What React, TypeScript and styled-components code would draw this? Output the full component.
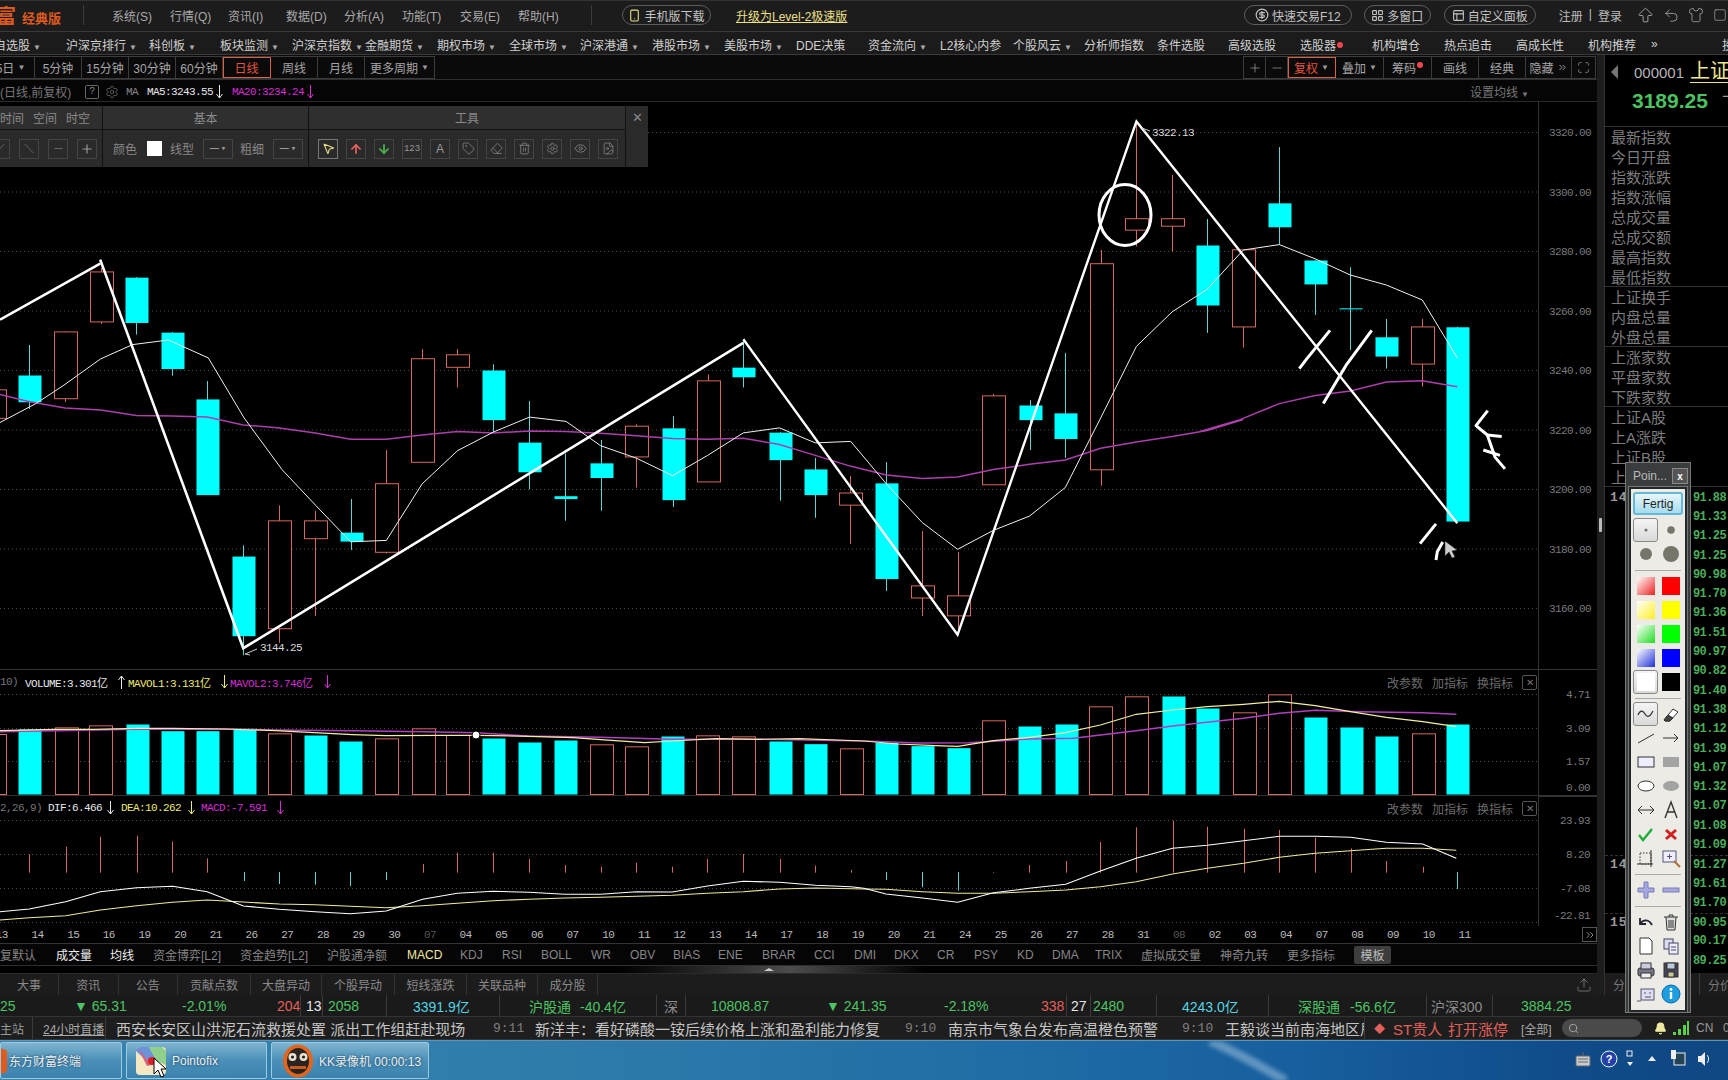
import React from 'react';
import styled, { createGlobalStyle } from 'styled-components';
import {
  Smartphone, CircleDollarSign, LayoutGrid, PanelsTopLeft, ArrowBigUp, Undo2, Shirt, Square,
  Settings, MousePointer2, ArrowUp, ArrowDown, Eraser, Trash2, Eye, Minus, Plus, Tag, FileImage,
  Maximize, ChevronsRight, Search, Bell, Upload,
} from 'lucide-react';

const SANS = `"Liberation Sans","Noto Sans CJK SC",sans-serif`;
const MONO = `"Liberation Mono","Noto Sans CJK SC",monospace`;

const Global = createGlobalStyle`
  html, body { margin: 0; padding: 0; background: #000; }
  #root { width: 1728px; height: 1080px; overflow: hidden; }
  * { box-sizing: border-box; }
`;

/* ---------- chart data, sampled from the picture ---------- */
const Y = (z: number) => 100 + z / 2.8;
const XA = (z: number) => z / 2.376;
const XB = (z: number) => 660 + z / 2.376;
const XC = (z: number) => 1200 + z / 3;
type C = [number, number, number, number, number, 'u' | 'd'];
const c9: C[] = [
  [-15, 810, 890, 810, 890, 'u'], [70, 686, 865, 770, 845, 'd'], [155, 648, 845, 648, 835, 'u'], [239, 470, 627, 480, 620, 'u'],
  [324, 496, 657, 496, 623, 'd'], [409, 650, 772, 650, 752, 'd'], [492, 787, 1105, 837, 1105, 'd'], [578, 1247, 1555, 1277, 1500, 'd'],
  [664, 1135, 1520, 1177, 1479, 'u'], [749, 1150, 1445, 1177, 1227, 'u'], [833, 1117, 1260, 1210, 1235, 'd'], [918, 980, 1270, 1073, 1265, 'u'],
  [1003, 697, 1013, 723, 1013, 'u'], [1087, 697, 805, 712, 747, 'u'], [1172, 740, 930, 756, 895, 'd'], [1258, 843, 1090, 958, 1041, 'd'],
  [1343, 990, 1178, 1108, 1116, 'd'], [1427, 952, 1150, 1016, 1057, 'd'], [1512, 908, 1085, 912, 998, 'u'],
];
const c10: C[] = [
  [30, 885, 1140, 918, 1119, 'd'], [113, 768, 1068, 785, 1068, 'u'], [198, 672, 805, 748, 775, 'd'], [284, 930, 1122, 930, 1007, 'd'],
  [369, 1002, 1170, 1033, 1105, 'd'], [452, 1053, 1243, 1099, 1133, 'u'], [538, 1014, 1375, 1072, 1340, 'd'], [623, 1207, 1445, 1359, 1393, 'u'],
  [707, 1265, 1490, 1387, 1443, 'u'], [792, 823, 1076, 827, 1076, 'u'], [878, 840, 980, 854, 895, 'd'], [963, 708, 1002, 876, 948, 'd'],
  [1047, 420, 1080, 457, 1034, 'u'], [1132, 60, 410, 331, 363, 'u'], [1217, 210, 425, 331, 352, 'u'], [1300, 333, 652, 406, 574, 'd'], [1386, 418, 693, 418, 634, 'u'],
];
const c11: C[] = [
  [238, 132, 405, 288, 355, 'd'], [346, 448, 602, 448, 515, 'd'], [451, 468, 700, 582, 584, 'd'], [559, 613, 752, 663, 717, 'd'], [667, 613, 802, 634, 738, 'u'], [772, 635, 1179, 635, 1179, 'd'],
];
const candles = [
  ...c9.map(c => ({ c, x: XA(c[0]) })), ...c10.map(c => ({ c, x: XB(c[0]) })), ...c11.map(c => ({ c, x: XC(c[0]) })),
];
type P = [number, number];
const conv = (pts: P[], fx: (n: number) => number, fy: (n: number) => number) => pts.map(([a, b]) => `${fx(a).toFixed(1)},${fy(b).toFixed(1)}`).join(' ');

const ma5 = [
  conv([[0, 903], [85, 850], [150, 800], [239, 725], [315, 685], [400, 672], [495, 722], [580, 890], [670, 1035], [750, 1135], [833, 1237], [918, 1233], [1003, 1075], [1087, 982], [1172, 930], [1258, 888], [1345, 900], [1427, 968], [1512, 1003]], XA, Y),
  conv([[30, 1052], [113, 995], [198, 932], [284, 918], [369, 960], [453, 956], [538, 1075], [623, 1183], [707, 1258], [792, 1205], [878, 1165], [963, 1085], [1047, 890], [1132, 690], [1217, 593], [1300, 530], [1386, 420]], XB, Y),
  conv([[238, 405], [346, 445], [451, 490], [559, 518], [667, 560], [772, 722]], XC, Y),
].join(' ');
const ma20 = [
  conv([[0, 825], [70, 845], [155, 862], [239, 868], [324, 883], [409, 885], [492, 888], [578, 910], [664, 918], [749, 932], [833, 950], [918, 950], [1003, 938], [1087, 928], [1172, 932], [1258, 927], [1343, 928], [1427, 933], [1512, 940]], XA, Y),
  conv([[30, 948], [113, 950], [198, 947], [284, 965], [369, 995], [452, 1025], [538, 1050], [623, 1060], [707, 1056], [792, 1035], [878, 1020], [963, 1008], [1047, 975], [1132, 958], [1217, 942], [1300, 925], [1386, 895]], XB, Y),
  conv([[0, 928], [120, 895], [238, 850], [346, 827], [451, 815], [559, 790], [667, 786], [772, 803]], XC, Y),
].join(' ');

const trendA = `0,${Y(615)} ${XA(238)},${Y(458)}`;
const trendB = `${XA(238)},${Y(447)} ${XA(578)},${Y(1535)} ${XB(198)},${Y(680)}`;
const trendC = `${XB(198)},${Y(670)} ${XB(707)},${Y(1497)} ${XB(1132)},${Y(60)} ${XC(0)},${Y(283)} ${XC(772)},${Y(1185)}`;
const scribbles = [
  [[298, 752], [320, 725], [390, 645]], [[370, 850], [440, 740], [515, 645]], [[660, 1242], [708, 1187]], [[708, 1288], [712, 1265], [728, 1238]],
  [[863, 870], [828, 912], [862, 938], [885, 1000], [915, 1033]], [[862, 938], [905, 942]], [[850, 980], [900, 995]],
] as P[][];

const FX = (z: number) => z / 1.815;
const GX = (z: number) => 864 + z / 1.815;
const VY = (z: number) => 660 + z / 3;
type V = [number, number, 'u' | 'd'];
const volA: V[] = [[-11, 222, 'u'], [53, 207, 'd'], [119, 202, 'u'], [182, 196, 'u'], [248, 192, 'd'], [313, 212, 'd'], [376, 212, 'd'], [442, 205, 'd'], [507, 220, 'u'], [572, 225, 'd'], [636, 243, 'd'], [701, 235, 'u'], [767, 205, 'u'], [830, 225, 'u'], [895, 234, 'd'], [960, 246, 'd'], [1026, 240, 'd'], [1090, 253, 'u'], [1155, 259, 'u'], [1220, 228, 'd'], [1284, 226, 'u'], [1349, 229, 'u'], [1415, 243, 'd'], [1480, 251, 'd'], [1544, 265, 'u']];
const volB: V[] = [[40, 247, 'd'], [106, 257, 'd'], [170, 263, 'd'], [235, 181, 'u'], [300, 198, 'd'], [366, 192, 'd'], [429, 139, 'u'], [494, 109, 'u'], [560, 108, 'd'], [623, 144, 'd'], [689, 157, 'u'], [754, 103, 'u'], [819, 171, 'd'], [883, 201, 'd'], [948, 228, 'd'], [1014, 220, 'u'], [1077, 192, 'd']];
const volBars = [...volA.map(v => ({ x: FX(v[0]), t: VY(v[1]), k: v[2] })), ...volB.map(v => ({ x: GX(v[0]), t: VY(v[1]), k: v[2] }))];
const volYellow = conv([[0, 212], [100, 208], [170, 208], [248, 205], [313, 205], [410, 207], [500, 212], [570, 218], [640, 224], [700, 227], [800, 226], [864, 226], [960, 229], [1040, 233], [1110, 241], [1170, 248], [1220, 243], [1300, 236], [1380, 238], [1450, 236], [1568, 243]], FX, VY) + ' ' + conv([[60, 252], [130, 257], [170, 259], [235, 242], [300, 232], [366, 218], [429, 195], [494, 163], [560, 150], [623, 140], [689, 133], [754, 124], [819, 137], [883, 155], [948, 172], [1014, 185], [1075, 200]], GX, VY);
const volPurple = conv([[0, 215], [100, 212], [248, 208], [410, 207], [500, 210], [640, 212], [770, 215], [864, 218], [960, 228], [1090, 232], [1220, 238], [1380, 238], [1568, 243]], FX, VY) + ' ' + conv([[100, 249], [190, 248], [300, 237], [380, 235], [494, 212], [560, 198], [689, 175], [754, 160], [819, 151], [900, 155], [1014, 158], [1075, 163]], GX, VY);

const macdA: [number, number, number][] = [[53, 583, 638], [119, 560, 638], [182, 530, 638], [248, 527, 638], [313, 545, 638], [376, 595, 638], [442, 636, 663], [507, 636, 672], [572, 636, 674], [636, 636, 678], [701, 636, 660], [767, 612, 638], [830, 578, 638], [895, 578, 638], [960, 597, 638], [1025, 615, 638], [1090, 620, 638], [1155, 608, 638], [1220, 620, 638], [1284, 597, 638], [1349, 582, 638], [1415, 597, 638], [1480, 617, 638], [1544, 630, 638]];
const macdB: [number, number, number][] = [[40, 636, 660], [106, 636, 682], [170, 636, 692], [235, 636, 638], [300, 615, 638], [366, 603, 638], [429, 546, 638], [494, 502, 638], [560, 482, 638], [623, 500, 638], [689, 506, 638], [754, 510, 638], [819, 533, 638], [883, 565, 638], [948, 603, 638], [1014, 620, 638], [1077, 636, 687]];
const macdBars = [...macdA.map(m => ({ x: FX(m[0]), a: m[1], b: m[2] })), ...macdB.map(m => ({ x: GX(m[0]), a: m[1], b: m[2] }))];
const dif = conv([[0, 755], [53, 747], [119, 725], [182, 695], [248, 683], [313, 679], [376, 695], [442, 738], [507, 748], [572, 755], [636, 761], [701, 753], [767, 718], [830, 700], [895, 694], [960, 697], [1025, 703], [1090, 703], [1155, 695], [1220, 696], [1284, 678], [1349, 664], [1415, 667], [1480, 676], [1544, 680]], FX, VY) + ' ' + conv([[0, 685], [40, 702], [106, 714], [170, 727], [235, 698], [300, 685], [366, 673], [429, 633], [494, 595], [560, 565], [623, 556], [689, 542], [754, 529], [819, 529], [883, 532], [948, 547], [1014, 552], [1075, 595]], GX, VY);
const dea = conv([[0, 780], [53, 773], [119, 767], [182, 750], [248, 737], [313, 727], [376, 720], [442, 726], [507, 732], [572, 734], [636, 739], [701, 743], [767, 737], [830, 730], [895, 722], [960, 718], [1025, 714], [1090, 712], [1155, 709], [1220, 706], [1284, 700], [1349, 695], [1415, 687], [1480, 684]], FX, VY) + ' ' + conv([[0, 687], [40, 688], [106, 695], [170, 700], [235, 700], [300, 695], [366, 690], [429, 680], [494, 665], [560, 642], [623, 625], [689, 610], [754, 592], [819, 580], [883, 572], [948, 565], [1014, 565], [1075, 571]], GX, VY);

const RED = '#d4695f';
const CYAN = '#00ffff';
const WICK_D = '#5fd4d4';
const GRID = '#4a4a4a';

/* ---------- shell ---------- */
const Page = styled.div`
  position: relative; width: 1728px; height: 1080px; overflow: hidden; background: #111;
  font-family: ${SANS}; font-size: 12px; color: #aaa; display: flex; flex-direction: column;
`;
const TitleBar = styled.header`
  height: 32px; flex: none; display: flex; align-items: center; background: #1c1c1c; border-bottom: 1px solid #3a3a3a; border-top: 1px solid #333; padding-bottom: 2px;
`;
const Logo = styled.div`
  width: 84px; height: 20px; display: flex; align-items: center; border-right: 1px solid #3c3c3c; margin-right: 28px; color: #dd5a1e; overflow: hidden; flex: none;
  b { font-size: 20px; margin-left: -4px; margin-right: 6px; font-weight: 700; }
  span { font-size: 13px; margin-top: 5px; font-weight: 700; }
`;
const MenuItem = styled.span`
  width: 58px; flex: none; color: #a9a9a9; font-size: 12px; white-space: nowrap;
`;
const MenuDivider = styled.span`width: 1px; height: 20px; background: #3c3c3c; margin: 0 30px 0 15px; flex: none;`;
const Pill = styled.span<{ $w: number; $mr: number }>`
  width: ${p => p.$w}px; margin-right: ${p => p.$mr}px; height: 20px; flex: none; border: 1px solid #5c5c5c; border-radius: 10px;
  display: flex; align-items: center; justify-content: center; gap: 3px; color: #c4c4c4; font-size: 12px; white-space: nowrap;
`;
const UpgradeLink = styled.a`color: #ede08a; text-decoration: underline; font-size: 12px; white-space: nowrap; margin-left: 25px;`;
const TitleRight = styled.div`margin-left: auto; margin-right: -5px; display: flex; align-items: center; flex: none;`;
const LoginText = styled.span`color: #bdbdbd; margin-right: 14px; display: flex; gap: 6px;`;
const IconSlot = styled.span<{ $w: number }>`width: ${p => p.$w}px; display: flex; color: #a8a8a8; flex: none;`;

const NavBar = styled.nav`
  height: 23px; flex: none; display: flex; align-items: center; background: #1b1b1b; border-bottom: 1px solid #3a3a3a; white-space: nowrap; overflow: hidden; padding-top: 2px;
`;
const NavItem = styled.span<{ $w: number; $first?: boolean }>`
  width: ${p => p.$w}px; flex: none; color: #cfcfcf; font-size: 12px; white-space: nowrap; ${p => (p.$first ? 'margin-left: -6px;' : '')}
  i { color: #aaa; font-style: normal; font-size: 8px; margin-left: 3px; }
  em { display: inline-block; width: 6px; height: 6px; border-radius: 50%; background: #f0454f; margin-left: 1px; vertical-align: 2px; }
`;

const Body = styled.div`flex: none; display: flex; height: 940px;`;
const LeftColumn = styled.div`width: 1597px; flex: none; display: flex; flex-direction: column; background: #000; overflow: hidden;`;
const Gutter = styled.div`
  width: 7px; flex: none; background: #1d1d1d; display: flex; align-items: center; justify-content: center;
  &::after { content: ''; width: 3px; height: 14px; background: #bbb; border-radius: 1px; }
`;

const PeriodRow = styled.div`
  height: 25px; flex: none; display: flex; align-items: flex-start; padding-top: 1px; border-bottom: 1px solid #2f2f2f; background: #0a0a0a; justify-content: space-between;
`;
const TabGroup = styled.div<{ $ml?: number; $mr?: number }>`
  display: flex; margin-left: ${p => p.$ml ?? 0}px; margin-right: ${p => p.$mr ?? 0}px; border: 1px solid #3c3c3c; border-left-width: ${p => (p.$ml ? 0 : 1)}px; height: 23px;
`;
const PeriodTab = styled.span<{ $w: number; $on?: boolean }>`
  width: ${p => p.$w}px; flex: none; display: flex; align-items: center; justify-content: center; gap: 3px; white-space: nowrap; font-size: 12px; position: relative;
  color: ${p => (p.$on ? '#e4533e' : '#a5a5a5')}; outline: ${p => (p.$on ? '1px solid #d9603f' : 'none')}; outline-offset: -1px;
  border-right: 1px solid #3c3c3c; &:last-child { border-right: 0; }
  i { font-style: normal; font-size: 8px; color: #999; }
  em { width: 6px; height: 6px; border-radius: 50%; background: #f0454f; margin-bottom: 6px; margin-left: -2px; }
`;
const InfoRow = styled.div`
  height: 22px; flex: none; display: flex; align-items: center; padding-top: 2px; background: #050505; border-bottom: 1px solid #2a2a2a; white-space: nowrap; position: relative; font-family: ${MONO}; font-size: 11px; letter-spacing: -0.6px;
`;
const InfoText = styled.span<{ $c: string; $w?: number; $sans?: boolean }>`
  color: ${p => p.$c}; ${p => (p.$w ? `width:${p.$w}px;` : '')} flex: none; display: inline-flex; align-items: center; gap: 3px;
  ${p => (p.$sans ? `font-family: ${SANS}; font-size: 12px; letter-spacing: 0;` : '')}
`;
const HelpBox = styled.span`width: 14px; height: 14px; border: 1px solid #666; border-radius: 2px; color: #888; display: flex; align-items: center; justify-content: center; font-size: 10px;`;
const SetMa = styled.span`position: absolute; left: 1470px; color: #777; font-family: ${SANS}; font-size: 12px; letter-spacing: 0;
  i { font-style: normal; font-size: 8px; margin-left: 3px; }`;

const ChartPane = styled.section<{ $h: number }>`position: relative; height: ${p => p.$h}px; flex: none; background: #000; overflow: hidden;`;
const ChartSvg = styled.svg`display: block; position: absolute; left: 0; top: 0;`;
const PaneTitle = styled.div<{ $top: number }>`
  position: absolute; left: 0; top: ${p => p.$top}px; height: 14px; display: flex; align-items: center; white-space: nowrap; font-family: ${MONO}; font-size: 11px; letter-spacing: -0.6px;
`;
const PaneTools = styled.div<{ $top: number }>`
  position: absolute; right: 60px; top: ${p => p.$top}px; display: flex; align-items: center; gap: 9px; color: #6b6b6b; font-size: 12px; white-space: nowrap;
`;
const PaneClose = styled.span`width: 15px; height: 15px; border: 1px solid #555; border-radius: 2px; display: flex; align-items: center; justify-content: center; font-size: 10px; color: #777;`;

const Toolbox = styled.div`
  position: absolute; left: 0; top: 4px; width: 648px; height: 61px; display: grid; grid-template-columns: 103px 206px 317px 22px; background: #2a2a2a;
`;
const ToolSection = styled.div`display: flex; flex-direction: column; border-right: 1px solid #111; overflow: hidden;`;
const ToolHead = styled.div<{ $start?: boolean }>`
  height: 24px; flex: none; background: #2f2f2f; border-bottom: 1px solid #111; display: flex; align-items: center; justify-content: ${p => (p.$start ? 'flex-start' : 'center')}; gap: 9px; color: #8a8a8a; font-size: 12px; white-space: nowrap;
`;
const ToolBody = styled.div<{ $ml?: number }>`flex: 1; display: flex; align-items: center; margin-left: ${p => p.$ml ?? 0}px;`;
const ToolBtn = styled.span<{ $w?: number; $mr: number; $sel?: boolean; $c?: string; $big?: boolean }>`
  width: ${p => p.$w ?? 20}px; height: 20px; flex: none; margin-right: ${p => p.$mr}px; border: 1px solid ${p => (p.$sel ? '#777' : '#444')};
  display: flex; align-items: center; justify-content: center; color: ${p => p.$c ?? '#999'}; gap: 2px;
  font-size: ${p => (p.$big ? 12 : 9)}px; font-family: ${p => (p.$big ? SANS : MONO)};
`;
const ToolLabel = styled.span<{ $mr: number }>`margin-right: ${p => p.$mr}px; color: #888; font-size: 12px; flex: none;`;
const Swatch = styled.span`width: 15px; height: 15px; background: #fff; flex: none; margin-right: 8px;`;
const ToolClose = styled.div`display: flex; align-items: flex-start; justify-content: center; padding-top: 4px; color: #888; font-size: 13px; background: #2a2a2a;`;

const DateRow = styled.div`height: 18px; flex: none; display: flex; align-items: center; margin-left: -16px; border-bottom: 1px solid #333; background: #000; position: relative; font-family: ${MONO}; font-size: 11px; letter-spacing: -0.6px;`;
const DateCell = styled.span<{ $dim?: boolean }>`width: 35.68px; flex: none; text-align: center; color: ${p => (p.$dim ? '#555' : '#bbb')};`;
const DateMore = styled.span`position: absolute; left: 1598px; top: 1px; width: 15px; height: 15px; border: 1px solid #555; display: flex; align-items: center; justify-content: center; color: #888;`;

const PosRow = styled.div<{ $h: number; $bg: string; $bt?: string }>`
  height: ${p => p.$h}px; flex: none; display: flex; align-items: center; background: ${p => p.$bg}; white-space: nowrap; overflow: hidden; ${p => (p.$bt ? `border-bottom: 1px solid ${p.$bt};` : '')}
`;
const PosCell = styled.span<{ $w: number; $c?: string; $sep?: boolean; $size?: number; $u?: boolean; $mono?: boolean }>`
  width: ${p => p.$w}px; flex: none; color: ${p => p.$c ?? '#8c8c8c'}; font-size: ${p => p.$size ?? 12}px; white-space: nowrap; overflow: hidden; align-self: stretch; display: flex; align-items: center;
  ${p => (p.$sep ? 'border-left: 1px solid #3a3a3a;' : '')} ${p => (p.$u ? 'text-decoration: underline;' : '')}
  ${p => (p.$mono ? `font-family: ${MONO};` : '')}
`;
const TemplateTag = styled.span`background: #3d3d3d; color: #bbb; height: 18px; width: 37px; border-radius: 2px; display: flex; align-items: center; justify-content: center; font-size: 12px;`;
const Splitter = styled.div`
  height: 7px; flex: none; background: linear-gradient(90deg, #000 620px, #4c4c4c 790px, #000 925px); padding-left: 764px;
  &::after { content: ''; display: block; width: 0; height: 0; border: 5px solid transparent; border-bottom: 3px solid #ccc; border-top: 0; margin-top: 2px; }
`;
const BottomTabs = styled.div`height: 22px; flex: none; display: flex; background: #1c1c1c; position: relative; border-top: 1px solid #2a2a2a;`;
const BottomTab = styled.span<{ $w: number }>`width: ${p => p.$w}px; flex: none; display: flex; align-items: center; justify-content: center; color: #8a8a8a; font-size: 12px; border-right: 1px solid #333; white-space: nowrap;`;
const Dock = styled.span`position: absolute; left: 1576px; top: 3px; color: #999; display: flex;`;

/* ---------- right panel ---------- */
const RightPanel = styled.aside`flex: 1; min-width: 0; background: #000; display: flex; flex-direction: column; overflow: hidden; border-left: 1px solid #333;`;
const QuoteHead = styled.div`height: 71px; flex: none; padding: 4px 0 0 6px; box-shadow: 0 1px 0 #333; white-space: nowrap;`;
const CodeLine = styled.div`display: flex; align-items: center; height: 26px; font-size: 15px; color: #b5b5b5;
  i { width: 0; height: 0; border: 7px solid transparent; border-right-color: #777; border-left: 0; margin-right: 16px; }
  b { color: #f0e68a; font-weight: 400; font-size: 20px; margin-left: 6px; border-bottom: 1px solid #f0e68a; line-height: 21px; }
`;
const BigPrice = styled.div`display: flex; align-items: center; height: 32px; margin-left: 21px; color: #4bc163; font: 700 21px ${SANS};
  span { color: #999; font-size: 16px; font-weight: 400; margin-left: 14px; }
`;
const StatGroup = styled.div`box-shadow: 0 1px 0 #333; padding: 0 0 0 6px; flex: none;`;
const StatRow = styled.div`height: 20px; display: flex; align-items: center; color: #7c7c7c; font-size: 15px; white-space: nowrap;`;
const Ticks = styled.div`flex: 1; padding-top: 2px; overflow: hidden;`;
const TickRow = styled.div<{ $dash?: boolean }>`
  height: 19.3px; display: flex; align-items: center; position: relative; font: 700 12px ${MONO}; letter-spacing: -0.6px;
  ${p => (p.$dash ? 'border-top: 1px dashed #333;' : '')}
`;
const TickTime = styled.span`width: 88px; padding-left: 5px; color: #999; font-size: 13px; letter-spacing: 1px;`;
const TickVal = styled.span`color: #4aad5a;`;
const SideTabs = styled.div`height: 22px; flex: none; display: flex; background: #1c1c1c; margin-top: auto;`;
const SideTab = styled.span`width: 95px; flex: none; border-right: 1px solid #3a3a3a; color: #777; display: flex; align-items: center; padding-left: 8px; font-size: 12px;`;

/* ---------- Pointofix ---------- */
const Palette = styled.div`
  position: absolute; left: 1625px; top: 462px; width: 66px; height: 551px; background: #3a3d3e; border: 1px solid #777; display: flex; flex-direction: column; padding: 0 3px;
`;
const PaletteTitle = styled.div`height: 24px; flex: none; display: flex; align-items: center; justify-content: space-between; padding-left: 4px; color: #b9b9b9; font-size: 12px; padding-top: 2px;`;
const PaletteClose = styled.span`width: 16px; height: 16px; background: #555; border: 1px solid #888; color: #fff; font-size: 10px; font-weight: 700; display: flex; align-items: center; justify-content: center; margin-right: -1px;`;
const PaletteInner = styled.div`flex: 1; background: #ecebe6; border: 2px solid #22282a; outline: 1px solid #777; display: flex; flex-direction: column; align-items: center; padding-top: 3px;`;
const Fertig = styled.span`width: 50px; height: 23px; flex: none; background: linear-gradient(#e8f6fb, #a5dcef); border: 2px solid #66b8d8; border-radius: 3px; color: #222; font-size: 12px; display: flex; align-items: center; justify-content: center;`;
const IconGrid = styled.div`display: grid; grid-template-columns: 25px 25px; grid-auto-rows: 24px; flex: none; margin-top: 3px;`;
const IconCell = styled.span<{ $sel?: boolean }>`
  display: flex; align-items: center; justify-content: center; border-radius: 3px; ${p => (p.$sel ? 'background: linear-gradient(#f5f5f5,#d9d9d9); border: 1px solid #8a8a8a;' : '')}
`;
const ColorChip = styled.span<{ $c: string; $soft?: boolean }>`
  width: 18px; height: 18px; display: block; background: ${p => (p.$soft ? `linear-gradient(135deg, #fff, ${p.$c})` : p.$c)};
`;
const PalSep = styled.hr`width: 46px; flex: none; border: 0; height: 1px; background: #aaa; margin: 4px 0 0;`;

/* ---------- task bar ---------- */
const NewsIcons = styled.span`display: flex; align-items: center;`;
const SearchBox = styled.span`width: 80px; height: 18px; border-radius: 9px; background: #4a4a4a; display: flex; align-items: center; padding-left: 6px; color: #aaa;`;
const Taskbar = styled.footer`
  height: 40px; flex: none; position: relative; overflow: hidden; display: flex; gap: 4px; padding-top: 1px; border-top: 1px solid #5d94b8;
  background: linear-gradient(90deg, #3a85ae 0%, #2f7cab 32%, #1f6ba4 60%, #175f9e 75%, #104c8a 90%, #0f4782 100%);
`;
const Streak = styled.svg`position: absolute; left: 1190px; top: 0; filter: blur(2px);`;
const TaskItem = styled.div<{ $w: number; $pl: number }>`
  width: ${p => p.$w}px; height: 37px; flex: none; position: relative; display: flex; align-items: center; gap: 5px; padding-left: ${p => p.$pl}px; color: #e8f2f8; font-size: 12px; white-space: nowrap; border-radius: 2px; overflow: hidden;
  background: linear-gradient(#7fb4cf, #4a90b8 50%, #3a82ae); border: 1px solid #9ccbe0; text-shadow: 0 0 3px #234;
`;
const Tray = styled.div`position: absolute; right: 16px; top: 7px; display: flex; align-items: center; gap: 8px; color: #dbe7f0;`;
const EdgeIcon = styled.svg`position: absolute; left: -8px; top: 4px;`;
const CursorIcon = styled.svg`position: absolute; left: 26px; top: 14px;`;

/* ---------- small drawings ---------- */
const Arrow: React.FC<{ d?: 'up' | 'down'; c: string }> = ({ d = 'down', c }) => (
  <svg width="7" height="14" viewBox="0 0 7 14" fill="none" stroke={c} strokeWidth="1">
    {d === 'down' ? <path d="M3.5 0v13M.5 9l3 4 3-4" /> : <path d="M3.5 14V1M.5 5l3-4 3 4" />}
  </svg>
);
const Ic: React.FC<{ children: React.ReactNode; s?: number }> = ({ children, s = 20 }) => (
  <svg width={s} height={s} viewBox="0 0 20 20" fill="none" stroke="#333" strokeWidth="1">{children}</svg>
);
const pfDot = (r: number) => <Ic><circle cx="10" cy="10" r={r} fill="#77756a" stroke="none" /></Ic>;
const pfIcons: React.ReactNode[] = [
  <Ic><path d="M2 11c2-5 5-5 7-1s5 3 8-3" strokeWidth="1.2" /></Ic>,
  <Ic><path d="M3 16l9-11 5 3-8 9H4z" fill="#fff" /><path d="M3 16l4-5 5 3-3 3H4z" fill="#444" /></Ic>,
  <Ic><path d="M2 15L18 6" /></Ic>,
  <Ic><path d="M2 10h15M13 6l4 4-4 4" /></Ic>,
  <Ic><rect x="2" y="5" width="16" height="10" fill="#eef" /></Ic>,
  <Ic><rect x="2" y="5" width="16" height="10" fill="#a3a3a3" stroke="none" /></Ic>,
  <Ic><ellipse cx="10" cy="10" rx="8" ry="5" fill="#fff" /></Ic>,
  <Ic><ellipse cx="10" cy="10" rx="8" ry="5" fill="#a3a3a3" stroke="none" /></Ic>,
  <Ic><path d="M2 10h16M6 6l-4 4 4 4M14 6l4 4-4 4" /></Ic>,
  <Ic><path d="M4 18L10 2l6 16M6.5 12h7" strokeWidth="1.4" /></Ic>,
  <Ic><path d="M3 11l4 5 9-11" stroke="#1fae3a" strokeWidth="2.4" /></Ic>,
  <Ic><path d="M5 6l10 9M15 6L5 15" stroke="#d02020" strokeWidth="3" /></Ic>,
  <Ic><path d="M1 16h16M15 2v17" /><rect x="4" y="5" width="11" height="11" strokeDasharray="1.5 1.5" /></Ic>,
  <Ic><rect x="2" y="3" width="13" height="11" fill="#eef" stroke="#557" /><path d="M6 8.5h5M8.5 6v5" stroke="#557" /><path d="M13 13l6 6" stroke="#b07030" strokeWidth="2" /></Ic>,
];
const pfIconsB: React.ReactNode[] = [
  <Ic><path d="M8 2h4v6h6v4h-6v6H8v-6H2V8h6z" fill="#a5a9dc" stroke="#7a7db8" /></Ic>,
  <Ic><rect x="2" y="8" width="16" height="4" fill="#a5a9dc" stroke="#7a7db8" /></Ic>,
];
const pfIconsC: React.ReactNode[] = [
  <Ic><path d="M4 6v6h6M4 12c3-5 9-5 12 1" stroke="#223" strokeWidth="1.8" /></Ic>,
  <Ic><path d="M3 5h14M8 5V3h4v2M5 5l1 13h8l1-13" fill="#ddd" /><path d="M8 8v8M10 8v8M12 8v8" /></Ic>,
  <Ic><path d="M4 2h9l3 3v13H4z" fill="#fff" /></Ic>,
  <Ic><rect x="3" y="3" width="9" height="10" fill="#dde" stroke="#446" /><rect x="8" y="7" width="9" height="11" fill="#eef" stroke="#446" /><path d="M10 11h5M10 14h5" stroke="#446" /></Ic>,
  <Ic><rect x="2" y="8" width="16" height="8" rx="2" fill="#778" /><rect x="5" y="3" width="10" height="6" fill="#ccd" /><rect x="5" y="13" width="10" height="5" fill="#eee" /></Ic>,
  <Ic><rect x="3" y="3" width="14" height="14" fill="#445" /><rect x="6" y="3" width="8" height="6" fill="#bcd" /><rect x="7" y="12" width="6" height="5" fill="#cc9" /></Ic>,
  <Ic><rect x="5" y="5" width="13" height="11" fill="#dde" stroke="#557" /><path d="M8 9h2M13 9h2M9 13h6M1 17h4" stroke="#557" /></Ic>,
  <Ic><circle cx="10" cy="10" r="9" fill="#1d9ee0" stroke="#0a6aa8" /><path d="M10 8v7" stroke="#fff" strokeWidth="2.4" /><circle cx="10" cy="5.4" r="1.4" fill="#fff" stroke="none" /></Ic>,
];
const colorRows: [string, string][] = [['#ee2020', '#ff0000'], ['#ffee20', '#ffff00'], ['#20dd20', '#00ff00'], ['#2030d8', '#0000ff']];

const PriceAxis = [3320, 3300, 3280, 3260, 3240, 3220, 3200, 3180, 3160];
const axisY = (v: number) => 132 + ((3320 - v) / 20) * 59.5;

const Plot: React.FC<{ kind: 'u' | 'd'; x: number; t: number; b: number }> = ({ kind, x, t, b }) => (
  <rect x={Math.round(x - 11) + 0.5} y={t + 0.5} width={23} height={Math.max(b - t, 1)} fill={kind === 'd' ? CYAN : '#000'} stroke={kind === 'd' ? CYAN : RED} strokeWidth={kind === 'd' ? 0 : 1} />
);
const SvgLabel: React.FC<{ x: number; y: number; children: React.ReactNode; anchor?: string }> = ({ x, y, children, anchor }) => (
  <text x={x} y={y + 4} fill="#7a7a7a" fontFamily="Liberation Mono" fontSize={11} letterSpacing={-0.6} textAnchor={anchor}>{children}</text>
);

const positioned = <T extends { x: number }>(items: T[], end: number) => items.map((it, i) => ({ ...it, w: (i + 1 < items.length ? items[i + 1].x : end) - it.x }));

const NAV = positioned([
  { t: '自选股', x: -6, d: 1 }, { t: '沪深京排行', x: 66, d: 1 }, { t: '科创板', x: 149, d: 1 }, { t: '板块监测', x: 220, d: 1 }, { t: '沪深京指数', x: 292, d: 1 },
  { t: '金融期货', x: 365, d: 1 }, { t: '期权市场', x: 437, d: 1 }, { t: '全球市场', x: 509, d: 1 }, { t: '沪深港通', x: 580, d: 1 }, { t: '港股市场', x: 652, d: 1 },
  { t: '美股市场', x: 724, d: 1 }, { t: 'DDE决策', x: 796 }, { t: '资金流向', x: 868, d: 1 }, { t: 'L2核心内参', x: 940 }, { t: '个股风云', x: 1013, d: 1 },
  { t: '分析师指数', x: 1084 }, { t: '条件选股', x: 1157 }, { t: '高级选股', x: 1228 }, { t: '选股器', x: 1300, r: 1 }, { t: '机构增仓', x: 1372 }, { t: '热点追击', x: 1444 },
  { t: '高成长性', x: 1516 }, { t: '机构推荐', x: 1588 }, { t: '»', x: 1651 }, { t: '投', x: 1722 },
] as { t: string; x: number; d?: number; r?: number }[], 1750);

const IND = positioned(
  ([['复默认', 0], ['成交量', 56, '#eee'], ['均线', 110, '#eee'], ['资金博弈[L2]', 153], ['资金趋势[L2]', 240], ['沪股通净额', 327], ['MACD', 407, '#eee9a0'], ['KDJ', 460], ['RSI', 502], ['BOLL', 541], ['WR', 591], ['OBV', 630], ['BIAS', 673], ['ENE', 718], ['BRAR', 762], ['CCI', 814], ['DMI', 854], ['DKX', 894], ['CR', 937], ['PSY', 974], ['KD', 1017], ['DMA', 1052], ['TRIX', 1095], ['虚拟成交量', 1141], ['神奇九转', 1220], ['更多指标', 1287]] as [string, number, string?][])
    .map(([t, x, c]) => ({ t, x, c })), 1354);

const G = '#4cc463', R2 = '#e0605c', W = '#e6e6e6', CY = '#55d4e4', DIM = '#8c8c8c';
const QUOTE = positioned([
  { t: '25', x: 0, c: G }, { t: '▼ 65.31', x: 74, c: G }, { t: '-2.01%', x: 182, c: G }, { t: '204', x: 277, c: R2 }, { t: '', x: 300, s: 1 }, { t: '13', x: 306, c: W }, { t: '', x: 322, s: 1 }, { t: '2058', x: 328, c: G },
  { t: '', x: 386, s: 1 }, { t: '3391.9亿', x: 413, c: CY }, { t: '', x: 499, s: 1 }, { t: '沪股通', x: 529, c: G }, { t: '-40.4亿', x: 580, c: G }, { t: '', x: 656, s: 1 }, { t: '深', x: 664, c: DIM }, { t: '', x: 685, s: 1 },
  { t: '10808.87', x: 711, c: G }, { t: '▼ 241.35', x: 826, c: G }, { t: '-2.18%', x: 944, c: G }, { t: '338', x: 1041, c: R2 }, { t: '', x: 1066, s: 1 }, { t: '27', x: 1071, c: W }, { t: '', x: 1090, s: 1 }, { t: '2480', x: 1093, c: G },
  { t: '', x: 1156, s: 1 }, { t: '4243.0亿', x: 1182, c: CY }, { t: '', x: 1268, s: 1 }, { t: '深股通', x: 1298, c: G }, { t: '-56.6亿', x: 1350, c: G }, { t: '', x: 1426, s: 1 }, { t: '沪深300', x: 1431, c: DIM }, { t: '', x: 1492, s: 1 }, { t: '3884.25', x: 1521, c: G },
] as { t: string; x: number; c?: string; s?: number }[], 1728);

const N = '#c4c4c4', NT = '#7e7e7e';
const NEWS = positioned([
  { t: '主站', x: 0, c: '#999', z: 12 }, { t: '', x: 32, s: 1 }, { t: '24小时直播', x: 43, c: '#aaa', z: 12, u: 1 }, { t: '', x: 105, s: 1 },
  { t: '西安长安区山洪泥石流救援处置 派出工作组赶赴现场', x: 116, c: N, z: 15 }, { t: '9:11', x: 493, c: NT, z: 13, m: 1 }, { t: '新洋丰：看好磷酸一铵后续价格上涨和盈利能力修复', x: 535, c: N, z: 15 },
  { t: '9:10', x: 905, c: NT, z: 13, m: 1 }, { t: '南京市气象台发布高温橙色预警', x: 948, c: N, z: 15 }, { t: '9:10', x: 1182, c: NT, z: 13, m: 1 }, { t: '王毅谈当前南海地区局势', x: 1225, c: N, z: 15 },
  { t: '', x: 1364, s: 1 }, { t: '◆', x: 1374, c: R2, z: 11 }, { t: 'ST贵人', x: 1393, c: R2, z: 15 }, { t: '打开涨停', x: 1448, c: R2, z: 15 }, { t: '[全部]', x: 1521, c: '#aaa', z: 12 },
] as { t: string; x: number; c?: string; z?: number; s?: number; u?: number; m?: number }[], 1562);

const BOTTOM = [['大事', 59], ['资讯', 59.5], ['公告', 59.5], ['贡献点数', 73], ['大盘异动', 71], ['个股异动', 73], ['短线涨跌', 72], ['关联品种', 71], ['成分股', 60]] as [string, number][];
const DATES = '13 14 15 16 19 20 21 26 27 28 29 30 07 04 05 06 07 10 11 12 13 14 17 18 19 20 21 24 25 26 27 28 31 08 02 03 04 07 08 09 10 11'.split(' ');
const STATS = [['最新指数', '今日开盘', '指数涨跌', '指数涨幅', '总成交量', '总成交额', '最高指数', '最低指数'], ['上证换手', '内盘总量', '外盘总量'], ['上涨家数', '平盘家数', '下跌家数'], ['上证A股', '上A涨跌', '上证B股', '上B涨跌']];
const TICKS = '91.88 91.33 91.25 91.25 90.98 91.70 91.36 91.51 90.97 90.82 91.40 91.38 91.12 91.39 91.07 91.32 91.07 91.08 91.09 91.27 91.61 91.70 90.95 90.17 89.25'.split(' ');

const grids = (ys: number[]) => ys.map(y => <line key={y} x1={0} x2={1538} y1={y + 0.5} y2={y + 0.5} stroke={GRID} strokeDasharray="1 3" />);

const App: React.FC = () => (
  <Page>
    <Global />
    <TitleBar>
      <Logo><b>富</b><span>经典版</span></Logo>
      {['系统(S)', '行情(Q)', '资讯(I)', '数据(D)', '分析(A)', '功能(T)', '交易(E)', '帮助(H)'].map(m => <MenuItem key={m}>{m}</MenuItem>)}
      <MenuDivider />
      <Pill $w={89} $mr={0}><Smartphone size={13} color="#e8e08a" />手机版下载</Pill>
      <UpgradeLink>升级为Level-2极速版</UpgradeLink>
      <TitleRight>
        <Pill $w={108} $mr={12}><CircleDollarSign size={14} />快速交易F12</Pill>
        <Pill $w={67} $mr={13}><LayoutGrid size={13} />多窗口</Pill>
        <Pill $w={92} $mr={23}><PanelsTopLeft size={13} />自定义面板</Pill>
        <LoginText>注册<span>|</span>登录</LoginText>
        <IconSlot $w={27}><ArrowBigUp size={19} strokeWidth={1.2} /></IconSlot>
        <IconSlot $w={25}><Undo2 size={17} strokeWidth={1.2} /></IconSlot>
        <IconSlot $w={25}><Shirt size={16} strokeWidth={1.2} /></IconSlot>
        <IconSlot $w={20}><Square size={14} strokeWidth={1.2} /></IconSlot>
      </TitleRight>
    </TitleBar>

    <NavBar>
      {NAV.map((n, i) => (
        <NavItem key={i} $w={n.w} $first={i === 0}>
          {n.t}{n.d ? <i>▼</i> : null}{n.r ? <em /> : null}
        </NavItem>
      ))}
    </NavBar>

    <Body>
      <LeftColumn>
        <PeriodRow>
          <TabGroup $ml={-13}>
            <PeriodTab $w={48}>5日<i>▼</i></PeriodTab>
            {['5分钟', '15分钟', '30分钟', '60分钟'].map(t => <PeriodTab key={t} $w={47}>{t}</PeriodTab>)}
            <PeriodTab $w={48} $on>日线</PeriodTab>
            <PeriodTab $w={47}>周线</PeriodTab>
            <PeriodTab $w={47}>月线</PeriodTab>
            <PeriodTab $w={69}>更多周期<i>▼</i></PeriodTab>
          </TabGroup>
          <TabGroup $mr={1}>
            <PeriodTab $w={22}><Plus size={14} strokeWidth={1.2} /></PeriodTab>
            <PeriodTab $w={22}><Minus size={14} strokeWidth={1.2} /></PeriodTab>
            <PeriodTab $w={48} $on>复权<i>▼</i></PeriodTab>
            <PeriodTab $w={48}>叠加<i>▼</i></PeriodTab>
            <PeriodTab $w={48}>筹码<em /></PeriodTab>
            <PeriodTab $w={47}>画线</PeriodTab>
            <PeriodTab $w={47}>经典</PeriodTab>
            <PeriodTab $w={46}>隐藏<ChevronsRight size={11} /></PeriodTab>
            <PeriodTab $w={23}><Maximize size={13} strokeWidth={1.2} /></PeriodTab>
          </TabGroup>
        </PeriodRow>

        <InfoRow>
          <InfoText $c="#777" $w={85} $sans>(日线,前复权)</InfoText>
          <InfoText $c="#777" $w={20}><HelpBox>?</HelpBox></InfoText>
          <InfoText $c="#777" $w={21}><Settings size={14} strokeWidth={1.2} /></InfoText>
          <InfoText $c="#888" $w={21}>MA</InfoText>
          <InfoText $c="#e8e8e8" $w={85}>MA5:3243.55<Arrow c="#e8e8e8" /></InfoText>
          <InfoText $c="#d42ed4">MA20:3234.24<Arrow c="#d42ed4" /></InfoText>
          <SetMa>设置均线<i>▼</i></SetMa>
        </InfoRow>

        <ChartPane $h={568}>
          <ChartSvg width={1597} height={568} viewBox="0 102 1597 568">
            {grids(PriceAxis.map(axisY))}
            <line x1={1538.5} x2={1538.5} y1={102} y2={670} stroke="#333" />
            <line x1={0} x2={1597} y1={669.5} y2={669.5} stroke="#333" />
            {PriceAxis.map(v => <SvgLabel key={v} x={1549} y={axisY(v)}>{v}.00</SvgLabel>)}
            {candles.map(({ c, x }, i) => (
              <g key={i}>
                <line x1={Math.round(x) + 0.5} x2={Math.round(x) + 0.5} y1={Y(c[1])} y2={Y(c[2])} stroke={c[5] === 'd' ? WICK_D : RED} />
                <Plot kind={c[5]} x={x} t={Y(c[3])} b={Y(c[4])} />
              </g>
            ))}
            <polyline points={ma20} fill="none" stroke="#ac3fac" strokeWidth={1.5} />
            <polyline points={ma5} fill="none" stroke="#f0f0f0" strokeWidth={1} />
            <polyline points={trendA} fill="none" stroke="#fff" strokeWidth={2.6} />
            <polyline points={trendB} fill="none" stroke="#fff" strokeWidth={2.6} />
            <polyline points={trendC} fill="none" stroke="#fff" strokeWidth={2.4} />
            <ellipse cx={1125} cy={215} rx={26} ry={30.5} fill="none" stroke="#fff" strokeWidth={3} />
            {scribbles.map((s, i) => <polyline key={i} points={conv(s, XC, Y)} fill="none" stroke="#fff" strokeWidth={3} strokeLinejoin="round" />)}
            <path d="M1445 541l0 15 4-4 3 6 3-1-3-6 5-1z" fill="#ccc" stroke="#222" strokeWidth={0.5} />
            <path d="M1142 128l8 3M1142 128l3 4" stroke="#ccc" fill="none" />
            <text x={1152} y={136} fill="#d8d8d8" fontFamily="Liberation Mono" fontSize={11} letterSpacing={-0.6}>3322.13</text>
            <path d="M245 654l12-5M245 654l5 1" stroke="#ccc" fill="none" />
            <text x={260} y={651} fill="#d8d8d8" fontFamily="Liberation Mono" fontSize={11} letterSpacing={-0.6}>3144.25</text>
          </ChartSvg>
          <Toolbox>
            <ToolSection>
              <ToolHead $start>
                <span>时间</span><span>空间</span><span>时空</span>
              </ToolHead>
              <ToolBody $ml={-10}>
                <ToolBtn $mr={9}>╱</ToolBtn><ToolBtn $mr={9}>╲</ToolBtn><ToolBtn $mr={9}><Minus size={13} strokeWidth={1} /></ToolBtn><ToolBtn $mr={0}><Plus size={14} strokeWidth={2} /></ToolBtn>
              </ToolBody>
            </ToolSection>
            <ToolSection>
              <ToolHead>基本</ToolHead>
              <ToolBody $ml={10}>
                <ToolLabel $mr={10}>颜色</ToolLabel><Swatch />
                <ToolLabel $mr={9}>线型</ToolLabel><ToolBtn $w={30} $mr={7}>━<span>▾</span></ToolBtn>
                <ToolLabel $mr={9}>粗细</ToolLabel><ToolBtn $w={30} $mr={0}>━<span>▾</span></ToolBtn>
              </ToolBody>
            </ToolSection>
            <ToolSection>
              <ToolHead>工具</ToolHead>
              <ToolBody $ml={9}>
                <ToolBtn $mr={8} $sel $c="#e8e08a"><MousePointer2 size={13} /></ToolBtn>
                <ToolBtn $mr={8} $c="#e0605c"><ArrowUp size={14} strokeWidth={3} /></ToolBtn>
                <ToolBtn $mr={8} $c="#4caf50"><ArrowDown size={14} strokeWidth={3} /></ToolBtn>
                <ToolBtn $mr={8}>123</ToolBtn>
                <ToolBtn $mr={8} $big>A</ToolBtn>
                <ToolBtn $mr={8}><Tag size={13} strokeWidth={1.2} /></ToolBtn>
                <ToolBtn $mr={8}><Eraser size={13} strokeWidth={1.2} /></ToolBtn>
                <ToolBtn $mr={8}><Trash2 size={13} strokeWidth={1.2} /></ToolBtn>
                <ToolBtn $mr={8}><Settings size={13} strokeWidth={1.2} /></ToolBtn>
                <ToolBtn $mr={8}><Eye size={13} strokeWidth={1.2} /></ToolBtn>
                <ToolBtn $mr={0}><FileImage size={13} strokeWidth={1.2} /></ToolBtn>
              </ToolBody>
            </ToolSection>
            <ToolClose>✕</ToolClose>
          </Toolbox>
        </ChartPane>

        <ChartPane $h={126}>
          <ChartSvg width={1597} height={126} viewBox="0 670 1597 126">
            {grids([694, 728, 761, 795])}
            <line x1={1538.5} x2={1538.5} y1={670} y2={796} stroke="#333" />
            <line x1={0} x2={1597} y1={795.5} y2={795.5} stroke="#333" />
            <SvgLabel x={1590} y={694} anchor="end">4.71</SvgLabel>
            <SvgLabel x={1590} y={728} anchor="end">3.09</SvgLabel>
            <SvgLabel x={1590} y={761} anchor="end">1.57</SvgLabel>
            <SvgLabel x={1590} y={787} anchor="end">0.00</SvgLabel>
            {volBars.map((b, i) => <Plot key={i} kind={b.k} x={b.x} t={b.t} b={794} />)}
            <polyline points={volPurple} fill="none" stroke="#b040c0" strokeWidth={1.5} />
            <polyline points={volYellow} fill="none" stroke="#f2efa0" strokeWidth={1.2} />
            <circle cx={476} cy={735} r={4} fill="#fff" stroke="#000" />
          </ChartSvg>
          <PaneTitle $top={5}>
            <InfoText $c="#777" $w={25}>10)</InfoText>
            <InfoText $c="#e8e8e8" $w={93}>VOLUME:3.301亿</InfoText>
            <InfoText $c="#e8e8e8" $w={10}><Arrow d="up" c="#e8e8e8" /></InfoText>
            <InfoText $c="#eeea70" $w={93}>MAVOL1:3.131亿</InfoText>
            <InfoText $c="#eeea70" $w={9}><Arrow c="#eeea70" /></InfoText>
            <InfoText $c="#d42ed4" $w={94}>MAVOL2:3.746亿</InfoText>
            <InfoText $c="#d42ed4"><Arrow c="#d42ed4" /></InfoText>
          </PaneTitle>
          <PaneTools $top={4}><span>改参数</span><span>加指标</span><span>换指标</span><PaneClose>✕</PaneClose></PaneTools>
        </ChartPane>

        <ChartPane $h={130}>
          <ChartSvg width={1597} height={130} viewBox="0 796 1597 130">
            {grids([820, 854, 888, 922])}
            <line x1={1538.5} x2={1538.5} y1={796} y2={926} stroke="#333" />
            <line x1={1538} x2={1597} y1={796.5} y2={796.5} stroke="#333" />
            <SvgLabel x={1590} y={820} anchor="end">23.93</SvgLabel>
            <SvgLabel x={1590} y={854} anchor="end">8.20</SvgLabel>
            <SvgLabel x={1590} y={888} anchor="end">-7.08</SvgLabel>
            <SvgLabel x={1590} y={915} anchor="end">-22.81</SvgLabel>
            {macdBars.map((m, i) => <line key={i} x1={Math.round(m.x) + 0.5} x2={Math.round(m.x) + 0.5} y1={VY(m.a)} y2={VY(m.b)} stroke={m.b > 640 ? WICK_D : RED} />)}
            <polyline points={dea} fill="none" stroke="#eeeb9c" strokeWidth={1.1} />
            <polyline points={dif} fill="none" stroke="#fff" strokeWidth={1.1} />
          </ChartSvg>
          <PaneTitle $top={5}>
            <InfoText $c="#777" $w={48}>2,26,9)</InfoText>
            <InfoText $c="#e8e8e8" $w={59}>DIF:6.466</InfoText>
            <InfoText $c="#e8e8e8" $w={14}><Arrow c="#e8e8e8" /></InfoText>
            <InfoText $c="#eeea70" $w={67}>DEA:10.262</InfoText>
            <InfoText $c="#eeea70" $w={13}><Arrow c="#eeea70" /></InfoText>
            <InfoText $c="#d42ed4" $w={76}>MACD:-7.591</InfoText>
            <InfoText $c="#d42ed4"><Arrow c="#d42ed4" /></InfoText>
          </PaneTitle>
          <PaneTools $top={4}><span>改参数</span><span>加指标</span><span>换指标</span><PaneClose>✕</PaneClose></PaneTools>
        </ChartPane>

        <DateRow>
          {DATES.map((d, i) => <DateCell key={i} $dim={i === 12 || i === 33}>{d}</DateCell>)}
          <DateMore><ChevronsRight size={12} /></DateMore>
        </DateRow>

        <PosRow $h={22} $bg="#050505" $bt="#2f2f2f">
          {IND.map(it => <PosCell key={it.x} $w={it.w} $c={it.c ?? '#868686'}>{it.t}</PosCell>)}
          <TemplateTag>模板</TemplateTag>
        </PosRow>
        <Splitter />
        <BottomTabs>
          {BOTTOM.map(([t, w]) => <BottomTab key={t} $w={w}>{t}</BottomTab>)}
          <Dock><Upload size={16} strokeWidth={1} /></Dock>
        </BottomTabs>
      </LeftColumn>

      <Gutter />

      <RightPanel>
        <QuoteHead>
          <CodeLine><i />000001<b>上证指数</b></CodeLine>
          <BigPrice>3189.25<span>下</span></BigPrice>
        </QuoteHead>
        {STATS.map((g, i) => (
          <StatGroup key={i}>{g.map(s => <StatRow key={s}>{s}</StatRow>)}</StatGroup>
        ))}
        <Ticks>
          {TICKS.map((t, i) => (
            <TickRow key={i} $dash={i === 19 || i === 22}>
              <TickTime>{i === 0 || i === 19 ? '14:59' : i === 22 ? '15:00' : ''}</TickTime>
              <TickVal>{t}</TickVal>
            </TickRow>
          ))}
        </Ticks>
        <SideTabs><SideTab>分时</SideTab><SideTab>分价</SideTab></SideTabs>
      </RightPanel>
    </Body>

    <PosRow $h={22} $bg="#1a1a1a" $bt="#333">
      {QUOTE.map(q => <PosCell key={q.x} $w={q.w} $c={q.c} $sep={!!q.s} $size={14}>{q.t}</PosCell>)}
    </PosRow>
    <PosRow $h={23} $bg="#1e1e1e" $bt="#333">
      {NEWS.map(n => <PosCell key={n.x} $w={n.w} $c={n.c} $sep={!!n.s} $size={n.z} $u={!!n.u} $mono={!!n.m}>{n.t}</PosCell>)}
      <PosCell $w={92}><SearchBox><Search size={11} /></SearchBox></PosCell>
      <PosCell $w={18} $c="#eee9a0"><NewsIcons><Bell size={13} fill="#eee9a0" /></NewsIcons></PosCell>
      <PosCell $w={24}>
        <NewsIcons>
          <svg width="18" height="16" viewBox="0 0 18 16"><path d="M1 12h3v3H1zM6 9h3v6H6zM11 5h3v10h-3z" fill="#5ccf4c" /><path d="M15 1h2v14h-2z" fill="#5ccf4c" /></svg>
        </NewsIcons>
      </PosCell>
      <PosCell $w={27} $c="#999" $size={12}>CN</PosCell>
      <PosCell $w={10} $c="#999">0</PosCell>
    </PosRow>

    <Taskbar>
      <Streak width={110} height={40} viewBox="0 0 110 40">
        <path d="M20 0C45 10 72 26 96 40" stroke="#cfe3f2" strokeWidth="9" fill="none" opacity="0.4" />
      </Streak>
      <TaskItem $w={122} $pl={8}>
        <EdgeIcon width="14" height="28" viewBox="0 0 14 28"><circle cx="6" cy="14" r="13" fill="#e05a1e" /></EdgeIcon>
        东方财富终端
      </TaskItem>
      <TaskItem $w={141} $pl={8}>
        <svg width="32" height="32" viewBox="0 0 32 32">
          <rect x="1" y="2" width="30" height="28" rx="4" fill="#f4e8c2" />
          <path d="M1 6l0-2 3-2h10L22 16 16 20z" fill="#6c92d8" />
          <path d="M14 2h13l4 4v14l-9-4z" fill="#8fd08a" />
          <path d="M3 3l13 17-4 1z" fill="#d9607c" />
          <circle cx="17" cy="16" r="4" fill="#e02020" />
        </svg>
        <CursorIcon width="14" height="22" viewBox="0 0 14 22"><path d="M1 1v16l4-4 3 7 3-1-3-7h5z" fill="#fff" stroke="#000" /></CursorIcon>
        Pointofix
      </TaskItem>
      <TaskItem $w={158} $pl={10}>
        <svg width="32" height="34" viewBox="0 0 32 34">
          <ellipse cx="16" cy="17" rx="15" ry="16.5" fill="#e0651e" />
          <ellipse cx="16" cy="17" rx="11" ry="13" fill="#2a2320" />
          <circle cx="10.5" cy="13" r="4" fill="#e8e2d0" /><circle cx="21.5" cy="13" r="4" fill="#e8e2d0" />
          <circle cx="10.5" cy="13" r="1.6" fill="#222" /><circle cx="21.5" cy="13" r="1.6" fill="#222" />
          <path d="M8 22h16v3H8z" fill="#c85a20" />
        </svg>
        KK录像机 00:00:13
      </TaskItem>
      <Tray>
        <svg width="18" height="20" viewBox="0 0 18 20"><rect x="2" y="7" width="14" height="10" rx="1" fill="#c8ccd0" stroke="#666" /><path d="M4 10h10M4 13h10M9 7V3" stroke="#666" /></svg>
        <svg width="18" height="18" viewBox="0 0 18 18"><circle cx="9" cy="9" r="8" fill="#2540a8" stroke="#dfe" /><text x="9" y="13" textAnchor="middle" fill="#fff" fontSize="11" fontWeight="700" fontFamily="Liberation Sans">?</text></svg>
        <svg width="8" height="18" viewBox="0 0 8 18"><rect x="1" y="1" width="5" height="5" fill="none" stroke="#eee" /><path d="M1 12h6l-3 4z" fill="#eee" /></svg>
        <svg width="14" height="8" viewBox="0 0 14 8"><path d="M6 6h8L10 1z" fill="#eee" /></svg>
        <svg width="24" height="22" viewBox="0 0 24 22"><rect x="10" y="5" width="11" height="12" fill="#245" stroke="#eee" /><path d="M7 2h5v9H7z" fill="#eee" /></svg>
        <svg width="16" height="20" viewBox="0 0 16 20"><path d="M2 7h3l4-4v14l-4-4H2z" fill="#eee" /><path d="M11 6c2 2 2 6 0 8" stroke="#eee" fill="none" /></svg>
      </Tray>
    </Taskbar>

    <Palette>
      <PaletteTitle>Poin...<PaletteClose>x</PaletteClose></PaletteTitle>
      <PaletteInner>
        <Fertig>Fertig</Fertig>
        <IconGrid>
          <IconCell $sel>{pfDot(1.6)}</IconCell><IconCell>{pfDot(3.8)}</IconCell>
          <IconCell>{pfDot(6)}</IconCell><IconCell>{pfDot(8)}</IconCell>
        </IconGrid>
        <PalSep />
        <IconGrid>
          {colorRows.map(([a, b]) => (
            <React.Fragment key={a}>
              <IconCell><ColorChip $c={a} $soft /></IconCell><IconCell><ColorChip $c={b} /></IconCell>
            </React.Fragment>
          ))}
          <IconCell $sel><ColorChip $c="#fff" /></IconCell><IconCell><ColorChip $c="#000" /></IconCell>
        </IconGrid>
        <PalSep />
        <IconGrid>
          {pfIcons.map((ic, i) => <IconCell key={i} $sel={i === 0}>{ic}</IconCell>)}
        </IconGrid>
        <PalSep />
        <IconGrid>{pfIconsB.map((ic, i) => <IconCell key={i}>{ic}</IconCell>)}</IconGrid>
        <PalSep />
        <IconGrid>{pfIconsC.map((ic, i) => <IconCell key={i}>{ic}</IconCell>)}</IconGrid>
      </PaletteInner>
    </Palette>
  </Page>
);

export default App;
